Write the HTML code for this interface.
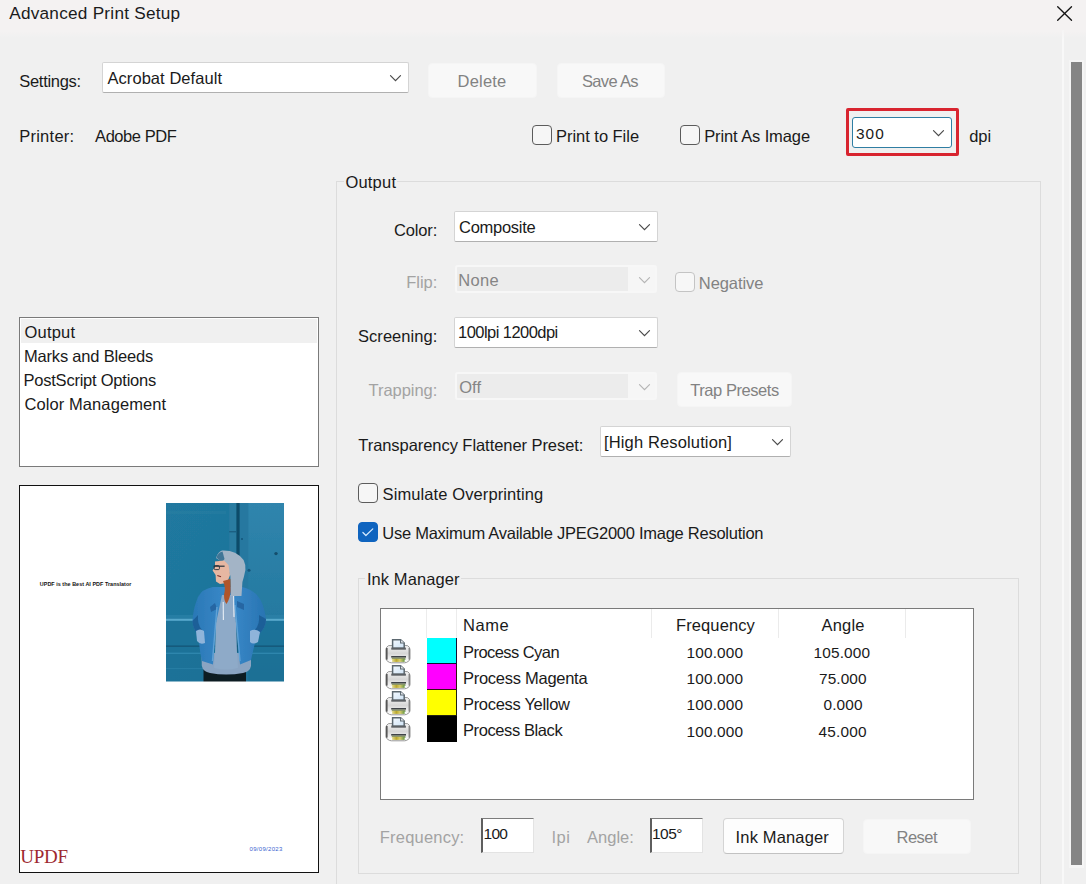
<!DOCTYPE html>
<html lang="en"><head><meta charset="utf-8"><title>Advanced Print Setup</title>
<style>
html,body{margin:0;padding:0;}
body{width:1086px;height:884px;overflow:hidden;background:#f0f0f0;font-family:"Liberation Sans",sans-serif;}
#root{position:relative;width:1086px;height:884px;overflow:hidden;background:#f0f0f0;}
#root *{box-sizing:border-box;}
.a{position:absolute;}
.t{position:absolute;white-space:pre;}
.titlebar{left:0;top:0;width:1086px;height:38px;background:linear-gradient(#f4f2f2 0,#f4f2f2 31px,#f0f0f0 38px);}
.sel{background:#fff;border:1px solid #d4d4d4;border-bottom-color:#b0b0b0;border-radius:2px;}
.seld{background:#ececec;border:2px solid #f7f7f7;border-radius:3px;}
.btn{background:#fdfdfd;border:1px solid #d4d4d4;border-bottom-color:#c2c2c2;border-radius:4px;}
.btnd{background:#f8f8f8;border:1px solid #f5f5f5;border-radius:4px;}
.cb{background:#f6f6f6;border:1px solid #5c5c5c;border-radius:4px;}
.cbd{background:#f7f7f7;border:1px solid #c4c4c4;border-radius:4px;}
.cbc{background:#0f64bf;border:1px solid #0f64bf;border-radius:4px;}
.fs{border:1px solid #dcdcdc;}
.leg{background:#f0f0f0;}
.inp{background:#fff;border:1px solid #e3e3e3;border-top:1px solid #7c7c7c;border-left:2px solid #5e5e5e;}
svg{position:absolute;overflow:visible;}

</style></head>
<body>
<div id="root">
<div class="a titlebar"></div>
<svg style="left:1057px;top:6px" width="15" height="15" viewBox="0 0 15 15"><path d="M0.7 0.7 L14.5 14.3 M14.5 0.7 L0.7 14.3" stroke="#161616" stroke-width="1.35" stroke-linecap="round" fill="none"/></svg>
<!-- right edge line & scrollbar -->
<div class="a" style="left:1062px;top:30px;width:2px;height:854px;background:linear-gradient(#f5f4f4,#f8f8f8 10px)"></div>
<div class="a" style="left:1069px;top:60px;width:15px;height:808px;background:#f5f5f5"></div>
<div class="a" style="left:1071px;top:62px;width:11px;height:803px;background:#858585"></div>

<!-- row 1 -->
<div class="a sel" style="left:102px;top:62px;width:307px;height:31px"></div>
<svg style="left:390px;top:75px" width="11" height="7" viewBox="0 0 11 7"><path d="M0.5 0.7 L5.5 5.7 L10.5 0.7" stroke="#4a4a4a" stroke-width="1.2" stroke-linecap="round" fill="none"/></svg>
<div class="a btnd" style="left:427.6px;top:62.7px;width:109px;height:35.5px"></div>
<div class="a btnd" style="left:556.8px;top:62.7px;width:108.2px;height:35.5px"></div>

<!-- row 2 -->
<div class="a cb" style="left:532px;top:125px;width:20px;height:20px"></div>
<div class="a cb" style="left:680px;top:125px;width:20px;height:20px"></div>
<div class="a" style="left:846px;top:108px;width:113px;height:48px;border:3px solid #d8242f;border-radius:2px"></div>
<div class="a" style="left:852px;top:117px;width:100px;height:31px;background:#fff;border:1px solid #2f7ea3;border-radius:3px"></div>
<svg style="left:933px;top:130px" width="11" height="7" viewBox="0 0 11 7"><path d="M0.5 0.7 L5.5 5.7 L10.5 0.7" stroke="#4a4a4a" stroke-width="1.2" stroke-linecap="round" fill="none"/></svg>

<!-- Output fieldset -->
<div class="a fs" style="left:336px;top:181px;width:705px;height:720px"></div>
<div class="a leg" style="left:344px;top:175px;width:53.3px;height:14px"></div>

<div class="a sel" style="left:454px;top:211px;width:204px;height:31px"></div>
<svg style="left:638.8px;top:224px" width="11" height="7" viewBox="0 0 11 7"><path d="M0.5 0.7 L5.5 5.7 L10.5 0.7" stroke="#4a4a4a" stroke-width="1.2" stroke-linecap="round" fill="none"/></svg>

<div class="a seld" style="left:455px;top:265px;width:202px;height:28px"></div>
<div class="a" style="left:628px;top:267px;width:27px;height:24px;background:#f6f6f6"></div>
<svg style="left:638.8px;top:277px" width="11" height="7" viewBox="0 0 11 7"><path d="M0.5 0.7 L5.5 5.7 L10.5 0.7" stroke="#b5b5b5" stroke-width="1.2" stroke-linecap="round" fill="none"/></svg>
<div class="a cbd" style="left:675px;top:272px;width:20px;height:20px"></div>

<div class="a sel" style="left:454px;top:317px;width:204px;height:31px"></div>
<svg style="left:638.8px;top:330px" width="11" height="7" viewBox="0 0 11 7"><path d="M0.5 0.7 L5.5 5.7 L10.5 0.7" stroke="#4a4a4a" stroke-width="1.2" stroke-linecap="round" fill="none"/></svg>

<div class="a seld" style="left:455px;top:372px;width:202px;height:28px"></div>
<div class="a" style="left:628px;top:374px;width:27px;height:24px;background:#f6f6f6"></div>
<svg style="left:638.8px;top:384px" width="11" height="7" viewBox="0 0 11 7"><path d="M0.5 0.7 L5.5 5.7 L10.5 0.7" stroke="#b5b5b5" stroke-width="1.2" stroke-linecap="round" fill="none"/></svg>
<div class="a btnd" style="left:677.2px;top:372px;width:115.2px;height:34.8px"></div>

<div class="a sel" style="left:600px;top:426px;width:191px;height:31px"></div>
<svg style="left:772px;top:439px" width="11" height="7" viewBox="0 0 11 7"><path d="M0.5 0.7 L5.5 5.7 L10.5 0.7" stroke="#4a4a4a" stroke-width="1.2" stroke-linecap="round" fill="none"/></svg>

<div class="a cb" style="left:358px;top:483px;width:20px;height:20px"></div>
<div class="a cbc" style="left:358px;top:522px;width:20px;height:20px"></div>
<svg style="left:358px;top:522px" width="20" height="20" viewBox="0 0 20 20"><path d="M4.9 10.5 L7.9 13.5 L14.8 6.9" stroke="#d8ecff" stroke-width="1.2" fill="none" stroke-linecap="round" stroke-linejoin="round"/></svg>

<!-- Ink Manager fieldset -->
<div class="a fs" style="left:358px;top:578px;width:661px;height:296px"></div>
<div class="a leg" style="left:365px;top:572px;width:95.5px;height:14px"></div>

<!-- table -->
<div class="a" style="left:380px;top:608px;width:594px;height:192px;background:#fff;border:1px solid #7a7a7a"></div>
<div class="a" style="left:426px;top:609px;width:1px;height:29px;background:#ececec"></div>
<div class="a" style="left:456px;top:609px;width:1px;height:29px;background:#ececec"></div>
<div class="a" style="left:651px;top:609px;width:1px;height:29px;background:#ebebeb"></div>
<div class="a" style="left:778px;top:609px;width:1px;height:29px;background:#ebebeb"></div>
<div class="a" style="left:905px;top:609px;width:1px;height:29px;background:#ebebeb"></div>
<div class="a" style="left:427px;top:638px;width:30px;height:26px;background:#00ffff;border-right:1px solid #113;border-bottom:1px solid #113"></div>
<div class="a" style="left:427px;top:664px;width:30px;height:26px;background:#ff00ff;border-right:1px solid #311;border-bottom:1px solid #311"></div>
<div class="a" style="left:427px;top:690px;width:30px;height:26px;background:#ffff00;border-right:1px solid #221;border-bottom:1px solid #221"></div>
<div class="a" style="left:427px;top:716px;width:30px;height:26px;background:#000"></div>

<svg width="0" height="0" style="left:0;top:0"><defs>
<linearGradient id="pb" x1="0" y1="0" x2="0" y2="1"><stop offset="0" stop-color="#f6f6f6"/><stop offset="0.45" stop-color="#d6d6d6"/><stop offset="0.7" stop-color="#ececec"/><stop offset="1" stop-color="#ffffff"/></linearGradient>
<linearGradient id="py" x1="0" y1="0" x2="1" y2="0"><stop offset="0" stop-color="#e9e3a0"/><stop offset="0.35" stop-color="#b9a82c"/><stop offset="0.6" stop-color="#d8cc6a"/><stop offset="1" stop-color="#4f8a3c"/></linearGradient>
<linearGradient id="pp" x1="0" y1="0" x2="1" y2="1"><stop offset="0" stop-color="#f3f9ff"/><stop offset="1" stop-color="#cfe3f5"/></linearGradient>
</defs></svg>
<svg style="left:382px;top:636px" width="32" height="30" viewBox="0 0 32 30">
<path d="M6.6 9.6 H25.4 Q28 11 28 13.5 V22.5 Q28 24.5 26 25.5 Q24.5 26.8 22.5 26.8 H9.5 Q7.5 26.8 6 25.5 Q4 24.5 4 22.5 V13.5 Q4 11 6.6 9.6 Z" fill="url(#pb)" stroke="#8a8a8a" stroke-width="0.9"/>
<rect x="3.9" y="12" width="1.7" height="11.6" fill="#565656"/>
<rect x="26.6" y="12" width="1.2" height="11.6" fill="#7a7a7a"/>
<path d="M10.6 3.7 H18.6 L22.2 7 V12.2 H10.6 Z" fill="url(#pp)" stroke="#5c6870" stroke-width="1.5" stroke-linejoin="miter"/>
<path d="M18.6 3.7 V7 H22.2" fill="#f7fbff" stroke="#5c6870" stroke-width="1.1"/>
<rect x="9.3" y="11.6" width="14.6" height="2.1" fill="#5d6165"/>
<rect x="9.2" y="20" width="14.8" height="1.6" fill="#3f4348"/>
<rect x="9.8" y="21.6" width="13.6" height="1.3" fill="#7d8a5a"/>
<rect x="9.4" y="22.9" width="14.2" height="3" fill="url(#py)"/>
<rect x="8.7" y="23.6" width="1.4" height="2.2" fill="#ffffff"/>
<rect x="22.6" y="23.6" width="1.6" height="2.2" fill="#ffffff"/>
</svg>
<svg style="left:382px;top:662px" width="32" height="30" viewBox="0 0 32 30">
<path d="M6.6 9.6 H25.4 Q28 11 28 13.5 V22.5 Q28 24.5 26 25.5 Q24.5 26.8 22.5 26.8 H9.5 Q7.5 26.8 6 25.5 Q4 24.5 4 22.5 V13.5 Q4 11 6.6 9.6 Z" fill="url(#pb)" stroke="#8a8a8a" stroke-width="0.9"/>
<rect x="3.9" y="12" width="1.7" height="11.6" fill="#565656"/>
<rect x="26.6" y="12" width="1.2" height="11.6" fill="#7a7a7a"/>
<path d="M10.6 3.7 H18.6 L22.2 7 V12.2 H10.6 Z" fill="url(#pp)" stroke="#5c6870" stroke-width="1.5" stroke-linejoin="miter"/>
<path d="M18.6 3.7 V7 H22.2" fill="#f7fbff" stroke="#5c6870" stroke-width="1.1"/>
<rect x="9.3" y="11.6" width="14.6" height="2.1" fill="#5d6165"/>
<rect x="9.2" y="20" width="14.8" height="1.6" fill="#3f4348"/>
<rect x="9.8" y="21.6" width="13.6" height="1.3" fill="#7d8a5a"/>
<rect x="9.4" y="22.9" width="14.2" height="3" fill="url(#py)"/>
<rect x="8.7" y="23.6" width="1.4" height="2.2" fill="#ffffff"/>
<rect x="22.6" y="23.6" width="1.6" height="2.2" fill="#ffffff"/>
</svg>
<svg style="left:382px;top:688px" width="32" height="30" viewBox="0 0 32 30">
<path d="M6.6 9.6 H25.4 Q28 11 28 13.5 V22.5 Q28 24.5 26 25.5 Q24.5 26.8 22.5 26.8 H9.5 Q7.5 26.8 6 25.5 Q4 24.5 4 22.5 V13.5 Q4 11 6.6 9.6 Z" fill="url(#pb)" stroke="#8a8a8a" stroke-width="0.9"/>
<rect x="3.9" y="12" width="1.7" height="11.6" fill="#565656"/>
<rect x="26.6" y="12" width="1.2" height="11.6" fill="#7a7a7a"/>
<path d="M10.6 3.7 H18.6 L22.2 7 V12.2 H10.6 Z" fill="url(#pp)" stroke="#5c6870" stroke-width="1.5" stroke-linejoin="miter"/>
<path d="M18.6 3.7 V7 H22.2" fill="#f7fbff" stroke="#5c6870" stroke-width="1.1"/>
<rect x="9.3" y="11.6" width="14.6" height="2.1" fill="#5d6165"/>
<rect x="9.2" y="20" width="14.8" height="1.6" fill="#3f4348"/>
<rect x="9.8" y="21.6" width="13.6" height="1.3" fill="#7d8a5a"/>
<rect x="9.4" y="22.9" width="14.2" height="3" fill="url(#py)"/>
<rect x="8.7" y="23.6" width="1.4" height="2.2" fill="#ffffff"/>
<rect x="22.6" y="23.6" width="1.6" height="2.2" fill="#ffffff"/>
</svg>
<svg style="left:382px;top:714px" width="32" height="30" viewBox="0 0 32 30">
<path d="M6.6 9.6 H25.4 Q28 11 28 13.5 V22.5 Q28 24.5 26 25.5 Q24.5 26.8 22.5 26.8 H9.5 Q7.5 26.8 6 25.5 Q4 24.5 4 22.5 V13.5 Q4 11 6.6 9.6 Z" fill="url(#pb)" stroke="#8a8a8a" stroke-width="0.9"/>
<rect x="3.9" y="12" width="1.7" height="11.6" fill="#565656"/>
<rect x="26.6" y="12" width="1.2" height="11.6" fill="#7a7a7a"/>
<path d="M10.6 3.7 H18.6 L22.2 7 V12.2 H10.6 Z" fill="url(#pp)" stroke="#5c6870" stroke-width="1.5" stroke-linejoin="miter"/>
<path d="M18.6 3.7 V7 H22.2" fill="#f7fbff" stroke="#5c6870" stroke-width="1.1"/>
<rect x="9.3" y="11.6" width="14.6" height="2.1" fill="#5d6165"/>
<rect x="9.2" y="20" width="14.8" height="1.6" fill="#3f4348"/>
<rect x="9.8" y="21.6" width="13.6" height="1.3" fill="#7d8a5a"/>
<rect x="9.4" y="22.9" width="14.2" height="3" fill="url(#py)"/>
<rect x="8.7" y="23.6" width="1.4" height="2.2" fill="#ffffff"/>
<rect x="22.6" y="23.6" width="1.6" height="2.2" fill="#ffffff"/>
</svg>
<!-- bottom row -->
<div class="a inp" style="left:481px;top:818px;width:53px;height:35px"></div>
<div class="a inp" style="left:650px;top:818px;width:53px;height:35px"></div>
<div class="a btn" style="left:722.5px;top:818.3px;width:121px;height:36.2px"></div>
<div class="a btnd" style="left:862.5px;top:818.8px;width:108.5px;height:35.2px"></div>

<!-- list -->
<div class="a" style="left:19px;top:317px;width:300px;height:150px;background:#fff;border:1px solid #7a7a7a"></div>
<div class="a" style="left:21px;top:319px;width:296px;height:24px;background:#f0f0f0"></div>

<!-- preview -->
<div class="a" style="left:19px;top:485px;width:300px;height:388px;background:#fff;border:1px solid #111"></div>
<svg style="left:166px;top:503px;overflow:hidden" width="118" height="178.5" viewBox="0 0 118 178.5">
<defs>
<linearGradient id="wl" x1="0" y1="0" x2="1" y2="1"><stop offset="0" stop-color="#2079a0"/><stop offset="1" stop-color="#1c7196"/></linearGradient>
<linearGradient id="wr" x1="0" y1="0" x2="0" y2="1"><stop offset="0" stop-color="#3085ad"/><stop offset="0.6" stop-color="#257aa1"/><stop offset="1" stop-color="#1d7094"/></linearGradient>
<linearGradient id="dn" x1="0" y1="0" x2="1" y2="0"><stop offset="0" stop-color="#2a78b6"/><stop offset="0.5" stop-color="#3b8aca"/><stop offset="1" stop-color="#2874b2"/></linearGradient>
<filter id="bl" x="-5%" y="-5%" width="110%" height="110%"><feGaussianBlur stdDeviation="0.55"/></filter>
<clipPath id="pc"><rect width="118" height="178.5"/></clipPath>
</defs>
<g clip-path="url(#pc)"><g filter="url(#bl)">
<rect x="-2" y="-2" width="122" height="183" fill="url(#wl)"/>
<rect x="82" y="-2" width="38" height="183" fill="url(#wr)"/>
<rect x="-2" y="8" width="62" height="3" fill="#2a7da2" opacity="0.5"/>
<rect x="63.2" y="-2" width="7.4" height="183" fill="#2b7ba1"/>
<rect x="70.4" y="-2" width="3.4" height="183" fill="#114c6a"/>
<rect x="73.8" y="-2" width="8.6" height="183" fill="#2878a0"/>
<rect x="63.2" y="28" width="7.4" height="1.4" fill="#1a5f82"/>
<circle cx="110" cy="50.6" r="1.7" fill="#124e6c"/>
<circle cx="83" cy="67.3" r="1.5" fill="#15557a"/>
<circle cx="76" cy="36" r="1" fill="#15557a"/>
<rect x="-2" y="112" width="122" height="4" fill="#2c82a8" opacity="0.7"/>
<rect x="-2" y="115.8" width="122" height="2" fill="#58a9cc"/>
<rect x="-2" y="118" width="122" height="62" fill="#1a6f96" opacity="0.55"/>
<rect x="-2" y="142.4" width="122" height="1.6" fill="#125a7c"/>
<rect x="-2" y="149.6" width="122" height="1.4" fill="#2f86ad"/>
<rect x="-2" y="165" width="40" height="1.2" fill="#2b80a6" opacity="0.8"/>
<!-- pants -->
<path d="M37.5 164 H80 V180 H37.5 Z" fill="#0c1a24"/>
<!-- hoodie bottom -->
<path d="M35.5 150 L35.8 163 Q37 168.5 44 170 Q60 173 77 170 Q84 168.5 85 163 L85 150 Z" fill="#8aa4c2"/>
<!-- jacket -->
<path d="M47 84 Q36 86 32 94 Q27 106 26.5 118 Q27 126 31 130 L33 140 Q34 150 36 158 L47 161.5 L50 120 L57 96 L66 94 L70 120 L74 161.5 L85 157 Q87 148 89 140 L94 130 Q100 124 100 116 Q98 100 91 92 Q85 86 76 84 Z" fill="url(#dn)"/>
<path d="M26.5 118 Q27 126 31 130 L36 127 Q31 121 32 112 Z" fill="#1f5f98"/>
<path d="M100 116 Q100 124 94 130 L89 127 Q94 121 93 112 Z" fill="#1f5f98"/>
<!-- hoodie body -->
<path d="M56 92 L50 120 L49 150 L48 165 Q60 168 72 165 L71 150 L70 120 L67 92 Z" fill="#8eaac8"/>
<path d="M49 100 L44 104 L45 109 L51 106 Z" fill="#2566a3"/>
<path d="M71 98 L78 101 L78 107 L71 104 Z" fill="#2566a3"/>
<path d="M51 104 L46.5 158" stroke="#5fa2d6" stroke-width="1.4" fill="none"/>
<path d="M69 102 L74 158" stroke="#5fa2d6" stroke-width="1.4" fill="none"/>
<!-- hands -->
<path d="M30 128 Q34 125 38 128 L39 140 Q34 142 31 138 Z" fill="#8fb4da"/>
<path d="M84 128 Q89 125 94 129 L92 139 Q87 142 84 139 Z" fill="#8fb4da"/>
<!-- drawstrings -->
<path d="M57.2 99 L57.4 117" stroke="#e8eef5" stroke-width="1.1" fill="none"/>
<path d="M67.6 92 L68 114" stroke="#e8eef5" stroke-width="1.1" fill="none"/>
<!-- hood -->
<path d="M56 47.6 Q70 47 77.6 57 Q80 62 79.4 67 Q78 74 76.4 79 L75.5 93 L65 93 L64.4 73 L61 62 L50 55 Q52 49 56 47.6 Z" fill="#a3b4c6"/>
<path d="M50.5 54.5 Q52 49.5 56.5 48.5 L58.5 56 L56 59.5 Z" fill="#3f7697"/>
<!-- face -->
<path d="M49 58.5 L58 57.5 L62.5 62 L64 72 L61 80 L54 81 L50 78.5 L49.6 72 L46.6 67.5 L49 64 Z" fill="#e7b7a2"/>
<path d="M47.7 63.2 H58.6" stroke="#27323c" stroke-width="1.2" fill="none"/>
<rect x="48.2" y="62.6" width="5.2" height="4" rx="1" fill="none" stroke="#27323c" stroke-width="0.9"/>
<path d="M51.3 72.6 L55 73.8" stroke="#7a2e2a" stroke-width="1.1" fill="none"/>
<!-- hair -->
<path d="M57 78 Q60 84 58 92 Q58 98 60.5 101 Q64 96 64.6 88 L64.4 76 Z" fill="#b0552b"/>
</g></g>
</svg>

<span class="t" style="left:9.20px;top:3.30px;font-size:17.2px;line-height:20.00px;letter-spacing:0.248px;color:#1b1b1b;">Advanced Print Setup</span>
<span class="t" style="left:19.30px;top:72.20px;font-size:16.5px;line-height:18.00px;letter-spacing:-0.302px;color:#1a1a1a;">Settings:</span>
<span class="t" style="left:107.50px;top:68.70px;font-size:16.5px;line-height:18.00px;letter-spacing:0.054px;color:#1a1a1a;">Acrobat Default</span>
<span class="t" style="left:457.60px;top:72.20px;font-size:16.5px;line-height:18.00px;letter-spacing:0.176px;color:#828282;">Delete</span>
<span class="t" style="left:582.00px;top:72.20px;font-size:16.5px;line-height:18.00px;letter-spacing:-0.666px;color:#828282;">Save As</span>
<span class="t" style="left:19.20px;top:127.10px;font-size:16.5px;line-height:18.00px;letter-spacing:0.257px;color:#1a1a1a;">Printer:</span>
<span class="t" style="left:95.10px;top:127.10px;font-size:16.5px;line-height:18.00px;letter-spacing:-0.452px;color:#1a1a1a;">Adobe PDF</span>
<span class="t" style="left:556.00px;top:127.20px;font-size:16.5px;line-height:18.00px;letter-spacing:-0.031px;color:#1a1a1a;">Print to File</span>
<span class="t" style="left:704.20px;top:127.20px;font-size:16.5px;line-height:18.00px;letter-spacing:-0.110px;color:#1a1a1a;">Print As Image</span>
<span class="t" style="left:856.00px;top:124.60px;font-size:15.4px;line-height:17.00px;letter-spacing:1.040px;color:#1a1a1a;">300</span>
<span class="t" style="left:969.30px;top:126.50px;font-size:16.5px;line-height:18.00px;letter-spacing:-0.127px;color:#1a1a1a;">dpi</span>
<span class="t" style="left:345.40px;top:172.80px;font-size:16.5px;line-height:18.00px;letter-spacing:0.210px;color:#1a1a1a;">Output</span>
<span class="t" style="left:394.10px;top:221.20px;font-size:16.5px;line-height:18.00px;letter-spacing:-0.166px;color:#1a1a1a;">Color:</span>
<span class="t" style="left:459.00px;top:218.00px;font-size:16.5px;line-height:18.00px;letter-spacing:-0.274px;color:#1a1a1a;">Composite</span>
<span class="t" style="left:406.30px;top:273.40px;font-size:16.5px;line-height:18.00px;letter-spacing:-0.047px;color:#a3a3a3;">Flip:</span>
<span class="t" style="left:458.30px;top:271.00px;font-size:16.5px;line-height:18.00px;letter-spacing:0.344px;color:#858585;">None</span>
<span class="t" style="left:698.80px;top:274.20px;font-size:16.5px;line-height:18.00px;letter-spacing:-0.064px;color:#828282;">Negative</span>
<span class="t" style="left:358.00px;top:327.00px;font-size:16.5px;line-height:18.00px;letter-spacing:0.045px;color:#1a1a1a;">Screening:</span>
<span class="t" style="left:458.00px;top:323.10px;font-size:16.5px;line-height:18.00px;letter-spacing:-0.545px;color:#1a1a1a;">100lpi 1200dpi</span>
<span class="t" style="left:368.50px;top:381.00px;font-size:16.5px;line-height:18.00px;letter-spacing:-0.039px;color:#a3a3a3;">Trapping:</span>
<span class="t" style="left:459.30px;top:377.50px;font-size:16.5px;line-height:18.00px;letter-spacing:-0.010px;color:#858585;">Off</span>
<span class="t" style="left:690.20px;top:380.60px;font-size:16.5px;line-height:18.00px;letter-spacing:-0.435px;color:#828282;">Trap Presets</span>
<span class="t" style="left:358.30px;top:435.70px;font-size:16.5px;line-height:18.00px;letter-spacing:-0.060px;color:#1a1a1a;">Transparency Flattener Preset:</span>
<span class="t" style="left:604.00px;top:432.60px;font-size:16.5px;line-height:18.00px;letter-spacing:0.140px;color:#1a1a1a;">[High Resolution]</span>
<span class="t" style="left:382.60px;top:485.00px;font-size:16.5px;line-height:18.00px;letter-spacing:0.096px;color:#1a1a1a;">Simulate Overprinting</span>
<span class="t" style="left:382.30px;top:523.80px;font-size:16.5px;line-height:18.00px;letter-spacing:-0.260px;color:#1a1a1a;">Use Maximum Available JPEG2000 Image Resolution</span>
<span class="t" style="left:366.90px;top:570.00px;font-size:16.5px;line-height:18.00px;letter-spacing:0.088px;color:#1a1a1a;">Ink Manager</span>
<span class="t" style="left:24.50px;top:322.60px;font-size:16.5px;line-height:18.00px;letter-spacing:0.210px;color:#1a1a1a;">Output</span>
<span class="t" style="left:24.00px;top:346.70px;font-size:16.5px;line-height:18.00px;letter-spacing:-0.188px;color:#1a1a1a;">Marks and Bleeds</span>
<span class="t" style="left:23.50px;top:370.50px;font-size:16.5px;line-height:18.00px;letter-spacing:-0.229px;color:#1a1a1a;">PostScript Options</span>
<span class="t" style="left:24.50px;top:394.60px;font-size:16.5px;line-height:18.00px;letter-spacing:0.084px;color:#1a1a1a;">Color Management</span>
<span class="t" style="left:463.00px;top:616.10px;font-size:16.5px;line-height:18.00px;letter-spacing:0.554px;color:#1a1a1a;">Name</span>
<span class="t" style="left:676.00px;top:616.10px;font-size:16.5px;line-height:18.00px;letter-spacing:0.112px;color:#1a1a1a;">Frequency</span>
<span class="t" style="left:821.50px;top:616.10px;font-size:16.5px;line-height:18.00px;letter-spacing:0.194px;color:#1a1a1a;">Angle</span>
<span class="t" style="left:463.00px;top:643.10px;font-size:16.5px;line-height:18.00px;letter-spacing:-0.557px;color:#1a1a1a;">Process Cyan</span>
<span class="t" style="left:463.00px;top:669.20px;font-size:16.5px;line-height:18.00px;letter-spacing:-0.273px;color:#1a1a1a;">Process Magenta</span>
<span class="t" style="left:463.00px;top:695.30px;font-size:16.5px;line-height:18.00px;letter-spacing:-0.313px;color:#1a1a1a;">Process Yellow</span>
<span class="t" style="left:463.00px;top:721.40px;font-size:16.5px;line-height:18.00px;letter-spacing:-0.407px;color:#1a1a1a;">Process Black</span>
<span class="t" style="left:686.50px;top:644.20px;font-size:15.4px;line-height:17.00px;letter-spacing:0.154px;color:#1a1a1a;">100.000</span>
<span class="t" style="left:686.50px;top:670.30px;font-size:15.4px;line-height:17.00px;letter-spacing:0.154px;color:#1a1a1a;">100.000</span>
<span class="t" style="left:686.50px;top:696.40px;font-size:15.4px;line-height:17.00px;letter-spacing:0.154px;color:#1a1a1a;">100.000</span>
<span class="t" style="left:686.50px;top:722.50px;font-size:15.4px;line-height:17.00px;letter-spacing:0.154px;color:#1a1a1a;">100.000</span>
<span class="t" style="left:813.50px;top:644.20px;font-size:15.4px;line-height:17.00px;letter-spacing:0.154px;color:#1a1a1a;">105.000</span>
<span class="t" style="left:819.00px;top:670.30px;font-size:15.4px;line-height:17.00px;letter-spacing:0.097px;color:#1a1a1a;">75.000</span>
<span class="t" style="left:823.50px;top:696.40px;font-size:15.4px;line-height:17.00px;letter-spacing:0.136px;color:#1a1a1a;">0.000</span>
<span class="t" style="left:818.50px;top:722.50px;font-size:15.4px;line-height:17.00px;letter-spacing:0.197px;color:#1a1a1a;">45.000</span>
<span class="t" style="left:379.80px;top:828.20px;font-size:16.5px;line-height:18.00px;letter-spacing:0.205px;color:#a3a3a3;">Frequency:</span>
<span class="t" style="left:483.60px;top:825.20px;font-size:15.5px;line-height:17.00px;letter-spacing:-0.770px;color:#1a1a1a;">100</span>
<span class="t" style="left:552.00px;top:828.20px;font-size:16.5px;line-height:18.00px;letter-spacing:0.729px;color:#a3a3a3;">lpi</span>
<span class="t" style="left:587.00px;top:828.20px;font-size:16.5px;line-height:18.00px;letter-spacing:0.020px;color:#a3a3a3;">Angle:</span>
<span class="t" style="left:652.00px;top:825.20px;font-size:15.5px;line-height:17.00px;letter-spacing:-0.520px;color:#1a1a1a;">105°</span>
<span class="t" style="left:735.60px;top:827.80px;font-size:16.5px;line-height:18.00px;letter-spacing:0.148px;color:#1a1a1a;">Ink Manager</span>
<span class="t" style="left:896.50px;top:827.80px;font-size:16.5px;line-height:18.00px;letter-spacing:-0.505px;color:#828282;">Reset</span>
<span class="t" style="left:20.30px;top:845.50px;font-size:19px;line-height:21.00px;letter-spacing:-0.236px;color:#9e2930;font-family:'Liberation Serif', serif;">UPDF</span>
<span class="t" style="left:249.60px;top:845.60px;font-size:6px;line-height:6.00px;letter-spacing:0.301px;color:#3a5fcf;">09/09/2023</span>
<span class="t" style="left:39.80px;top:580.60px;font-size:5.4px;line-height:6.00px;letter-spacing:0.050px;color:#111;font-weight:bold;">UPDF is the Best AI PDF Translator</span>
</div>
</body></html>
